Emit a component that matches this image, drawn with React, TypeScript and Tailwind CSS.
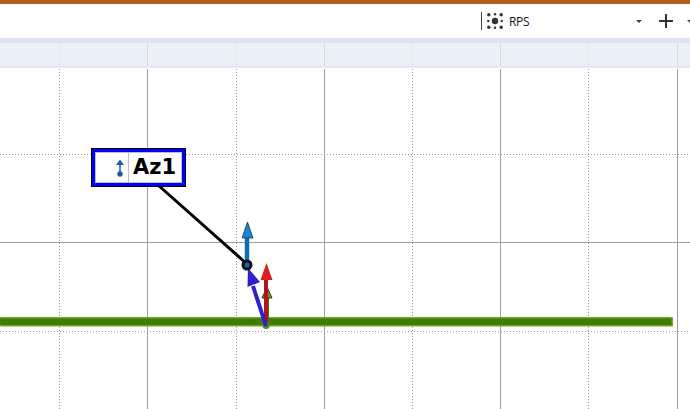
import * as React from 'react';

const solidX = [147.5, 324.5, 500.5, 677.5];
const dottedX = [59.5, 236.5, 412.5, 588.5];

function RulerTicks() {
  return (
    <svg width="690" height="23" className="block">
      {solidX.map((x) => (
        <line key={x} x1={x} x2={x} y1="0" y2="23" stroke="#d6dade" strokeWidth="1" />
      ))}
      {dottedX.map((x) => (
        <line key={x} x1={x} x2={x} y1="0" y2="23" stroke="#d6dade" strokeWidth="1" strokeDasharray="1 2" />
      ))}
    </svg>
  );
}

function Plot() {
  return (
    <svg width="690" height="341" viewBox="0 68 690 341" className="block">
      {/* grid */}
      {solidX.map((x) => (
        <line key={x} x1={x} x2={x} y1="69" y2="409" stroke="#a0a0a0" strokeWidth="1" />
      ))}
      {dottedX.map((x) => (
        <line key={x} x1={x} x2={x} y1="69" y2="409" stroke="#a0a0a0" strokeWidth="1" strokeDasharray="1 2" />
      ))}
      <line x1="0" x2="690" y1="242.5" y2="242.5" stroke="#a0a0a0" strokeWidth="1" />
      <line x1="0" x2="690" y1="154.5" y2="154.5" stroke="#a0a0a0" strokeWidth="1" strokeDasharray="1 2" />
      <line x1="0" x2="690" y1="331.5" y2="331.5" stroke="#a0a0a0" strokeWidth="1" strokeDasharray="1 2" />

      {/* green beam */}
      <rect x="0" y="317" width="673" height="9.500" rx="1" fill="#6aa82a" />
      <rect x="0" y="318.500" width="671.500" height="6.500" fill="#427a08" />

      {/* leader */}
      <line x1="158" y1="185" x2="247" y2="264" stroke="#000" strokeWidth="3" />

      {/* olive arrow */}
      <path d="M267 326V298" stroke="#3f7407" strokeWidth="4" />
      <path d="M267 287l5 11h-10z" fill="#6f9a20" stroke="#333" strokeWidth="1" />

      {/* red arrow */}
      <path d="M266 326V279" stroke="#b3141c" strokeWidth="4" />
      <path d="M266.500 263l6 17h-12z" fill="#dd1c24" />

      {/* blue arrow */}
      <circle cx="266" cy="325.500" r="3.500" fill="#4f8a1c" />
      <path d="M266 326l-13-40" stroke="#2f1fd0" strokeWidth="4" />
      <path d="M248 268l12 14-12.500 5z" fill="#2f1fd0" />

      {/* cyan arrow */}
      <path d="M247 262V237" stroke="#0a6fb4" strokeWidth="4.500" />
      <path d="M247.500 222l5.500 16h-11z" fill="#1086d4" stroke="#222" strokeWidth="0.7" />
      <circle cx="247" cy="265" r="4" fill="#0a6fb4" stroke="#111" strokeWidth="3" />
    </svg>
  );
}

export default function App() {
  return (
    <div className="relative h-[409px] w-[690px] overflow-hidden bg-white font-['Open_Sans',sans-serif]">
      <div className="h-1 bg-[#b06022]" />

      {/* toolbar */}
      <div className="flex h-[34px] items-center bg-white pl-[481px]">
        <div className="h-[18px] w-px shrink-0 bg-[#444]" />
        <svg width="16" height="16" viewBox="0 0 16 16" className="ml-[5px] shrink-0" fill="#333">
          <circle cx="8" cy="8" r="3.200" />
          <circle cx="1.800" cy="1.800" r="1.700" />
          <circle cx="8" cy="1.300" r="1.200" />
          <circle cx="14.200" cy="1.800" r="1.700" />
          <circle cx="1.300" cy="8" r="1.200" />
          <circle cx="14.700" cy="8" r="1.200" />
          <circle cx="1.800" cy="14.200" r="1.700" />
          <circle cx="8" cy="14.700" r="1.200" />
          <circle cx="14.200" cy="14.200" r="1.700" />
        </svg>
        <span className="ml-[6px] w-[127px] shrink-0 pt-px text-[12px] leading-none tracking-[-0.3px] text-[#111]">RPS</span>
        <svg width="6" height="3" viewBox="0 0 6 3" className="shrink-0" fill="#444">
          <path d="M0 0h6L3 3z" />
        </svg>
        <svg width="14" height="14" viewBox="0 0 14 14" className="ml-[17px] shrink-0" stroke="#333" strokeWidth="2">
          <path d="M7 0v14M0 7h14" />
        </svg>
        <svg width="6" height="3" viewBox="0 0 6 3" className="ml-[14px] shrink-0" fill="#444">
          <path d="M0 0h6L3 3z" />
        </svg>
      </div>

      {/* ruler */}
      <div className="h-[5px] bg-[#dde3ee]" />
      <div className="h-[23px] bg-[#ebeff7]">
        <RulerTicks />
      </div>
      <div className="h-[2px] bg-[#e3e8ee]" />

      <Plot />

      {/* tag on the canvas */}
      <div className="absolute left-[91px] top-[148px] h-[39px] w-[95px] border border-black bg-[#0000ff] p-[3px]">
        <div className="flex h-full items-stretch border border-[#c0c0c0] bg-white">
          <div className="flex w-[33px] shrink-0 items-center justify-end border-r border-[#c0c0c0] pr-[4px]">
            <svg width="8" height="18" viewBox="0 0 8 18" fill="none" stroke="#1a5ba8" strokeWidth="1.500">
              <path d="M4 2v12" />
              <path d="M4 0.500L8 6H0z" fill="#1a5ba8" stroke="none" />
              <circle cx="4" cy="15" r="2" fill="#1a5ba8" />
            </svg>
          </div>
          <span className="ml-[4px] font-['DejaVu_Sans',sans-serif] text-[21px] font-bold leading-[29px] text-black">
            Az1
          </span>
        </div>
      </div>
    </div>
  );
}
